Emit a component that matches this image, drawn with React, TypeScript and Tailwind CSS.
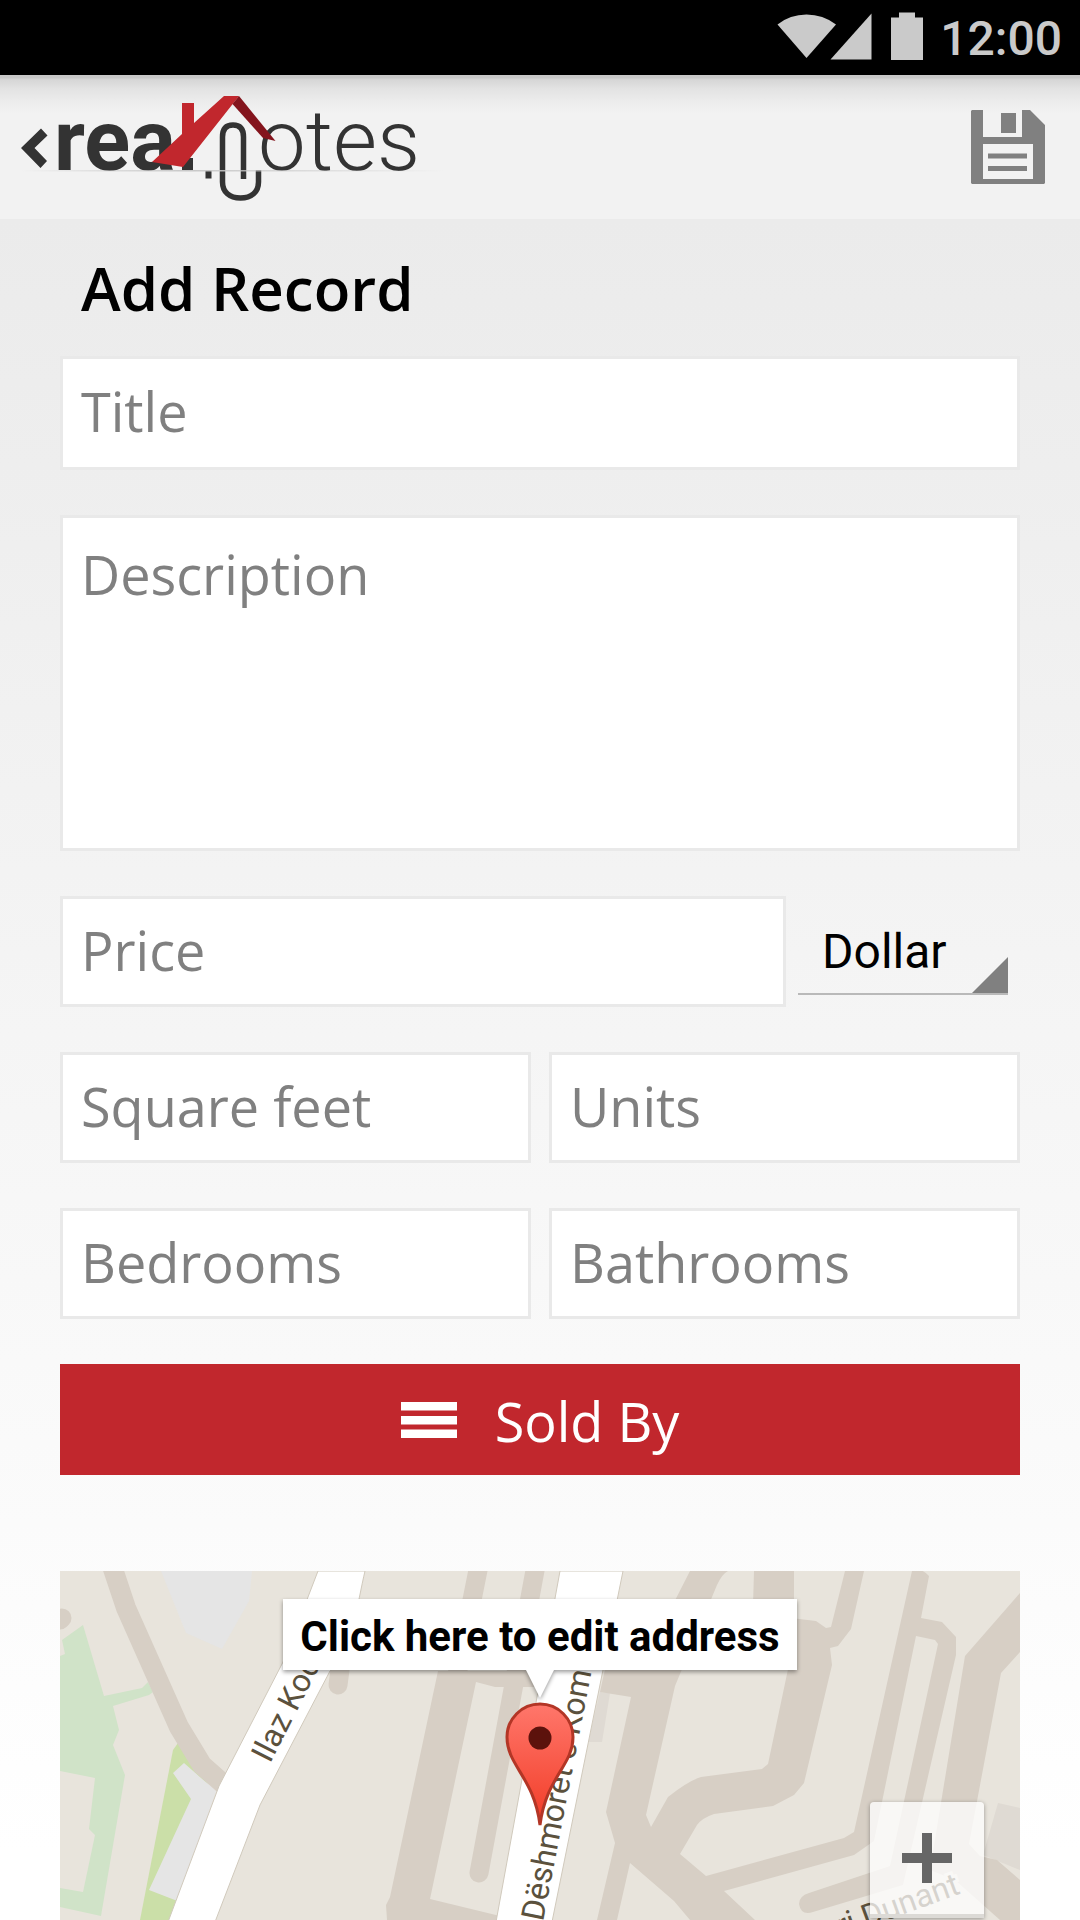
import React from "react";

const fieldClass =
  "block w-full min-w-0 rounded-none border-3 border-[#e9e9e9] bg-white px-[18px] text-[54px] text-black placeholder:text-[#808080] placeholder:opacity-100 outline-none";

function Field({ label, tall = false }: { label: string; tall?: boolean }) {
  return (
    <input
      type="text"
      aria-label={label}
      placeholder={label}
      className={`${fieldClass} pb-[4px] ${tall ? "h-[114px]" : "h-[111px]"}`}
    />
  );
}

function StatusBar() {
  return (
    <div className="flex h-[75px] items-center justify-end bg-black pr-[18px] text-[#cacaca]">
      <svg className="h-[75px] w-[160px]" viewBox="770 0 160 75" fill="currentColor" aria-hidden="true">
        <path d="M806.500 58 777.500 24.500Q790 14.500 806.500 14.500T836 24.500Z" />
        <path d="M871.500 13.500V59.500H830.500Z" />
        <path d="M891 17.500h8v-5h16v5h8v42.500h-32z" />
      </svg>
      <span className="ml-[10px] pt-[3px] font-['Roboto',sans-serif] text-[48px] font-medium leading-[72px]">12:00</span>
    </div>
  );
}

function Logo() {
  return (
    <svg className="h-[144px] w-[450px]" viewBox="0 75 450 144" role="img" aria-label="real notes">
      <defs>
        <linearGradient id="rule" x1="0" x2="1" y1="0" y2="0">
          <stop offset="0" stopColor="#c8c8c8" stopOpacity="0" />
          <stop offset="0.400" stopColor="#c8c8c8" />
          <stop offset="1" stopColor="#c8c8c8" stopOpacity="0" />
        </linearGradient>
      </defs>
      <path d="M41 128.500 47.500 135.500 34.500 148 47 161 40.500 168 21 148Z" fill="#333" />
      <g fill="#333" fontFamily="Roboto, sans-serif" fontSize="85">
        <text x="54" y="170" fontWeight="700">rea</text>
        <text x="258" y="170" fontWeight="300">otes</text>
      </g>
      <path d="M182 158h11v12h-11zM205.500 170.500h6v8h-6z" fill="#333" />
      <path
        d="M243.500 179V137q0-12-10.500-12t-10.500 12v45c0 10 7 16 18 16s18-6 18-16v-12"
        fill="none"
        stroke="#333"
        strokeWidth="5.500"
      />
      <path d="M182 103h12v20L224 96h15L183 167 152 162 182 134Z" fill="#c1272d" />
      <path d="M239 96 275.500 141 263 138 232.500 104Z" fill="#84141d" />
      <rect x="20" y="170" width="425" height="1.500" fill="url(#rule)" />
    </svg>
  );
}

function Header() {
  return (
    <header className="flex h-[144px] items-center justify-between bg-[#f2f2f2] bg-[linear-gradient(to_bottom,#c8c8c8_0px,#c8c8c8_3px,#d5d5d5_4px,#e3e3e3_14px,#ebebeb_25px,#f2f2f2_38px)] pr-[35px]">
      <button type="button" aria-label="Back">
        <Logo />
      </button>
      <button type="button" aria-label="Save">
        <svg className="size-[74px]" viewBox="0 0 74 74" fill="#808080" aria-hidden="true">
          <path
            fillRule="evenodd"
            d="M1 0H12V27H51V0H59L74 15V73L73 74H1L0 73V1ZM12 34V69H62V34Z"
          />
          <path d="M30 3h15v20H30zM17 43.500h39v5H17zM17 56h39v5H17z" />
        </svg>
      </button>
    </header>
  );
}

function StreetMap() {
  return (
    <svg
      className="absolute inset-0 h-full w-full"
      viewBox="60 1571 960 349"
      preserveAspectRatio="xMidYMin slice"
      aria-label="Map"
    >
      <defs>
        <linearGradient id="pin" x1="0" x2="0" y1="0" y2="1">
          <stop offset="0" stopColor="#ff776b" />
          <stop offset="1" stopColor="#f23b26" />
        </linearGradient>
      </defs>
      <path fill="#e8e4dc" d="M60 1571h960v349H60z" />
      {/* parks */}
      <g fill="#d0e3c8">
        <path d="M83 1625 104 1696 142 1688 148 1682 153 1692 149 1695 113 1706 119 1730 113 1745 125 1775 101 1916 60 1907V1888L83 1892 95 1835 89 1829 95 1778 60 1771V1656L65 1654 62 1640Z" />
        <path fill="#cbdfa8" d="M173 1750 178 1743 212 1790 175 1920H140Z" />
      </g>
      {/* buildings */}
      <g fill="#e5e5e5">
        <path d="M161 1571H252L249 1601 222 1649 186 1633Z" />
        <path d="M173 1773 184 1763 216 1791 180 1902 149 1890 191 1799Z" />
        <path fill="#dfdad3" d="M610 1693 602 1742H588L600 1692ZM998 1803 1020 1808V1870L983 1855Z" />
      </g>
      {/* minor streets */}
      <g fill="none" stroke="#d7cfc5" strokeWidth="19">
        <path d="M112 1566 126 1608 179 1727 202 1765 228 1788" strokeWidth="20" />
        <path d="M60 1620 62 1618" strokeLinecap="round" />
        <path d="M340 1670 338 1685" strokeLinecap="round" />
        <path d="M479 1565 440 1760" />
        <path d="M536 1565 479 1873" strokeLinecap="round" />
      </g>
      <g fill="#d7cfc5">
        <path d="M438 1671H538V1687H495L476 1682 430 1899 500 1916V1920H387L386 1905 390 1897Z" />
        <path d="M684 1571H728Q722 1574 717 1585L675 1686 646 1815 651 1827 668 1797Q688 1781 701 1777L762 1769 768 1764 791 1655V1618L816 1621 826 1628 831 1627 845 1571H864L851 1629 838 1646 830 1648 832 1665 804 1783 794 1795 773 1806 714 1814Q702 1818 697 1825L680 1854 706 1876 844 1838 854 1832 912 1571Q921 1567 929 1576L921 1618 942 1622 956 1637V1655L903 1885 813 1912Q801 1916 799 1904 799 1896 809 1893L890 1866 938 1644 935 1640 916 1636 874 1841 854 1855 724 1891 755 1920H690L674 1901 630 1863 617 1920H597L615 1843 606 1812 631 1697 600 1692 605 1669H640L690 1571Z" />
        <path d="M754 1571H794V1640H752Z" />
        <path d="M1020 1593V1652L1001 1673 969 1844 980 1856 997 1860 1020 1880V1920H1000L955 1880 930 1870 965 1656Z" />
      </g>
      {/* main streets */}
      <g fill="#fff" stroke="#d0c9bc" strokeWidth="1">
        <path d="M318 1571H365C358 1600 350 1660 330 1671L260 1805 215 1922H168L219 1786 283 1662Z" />
        <path d="M560 1571H623L552 1922H496L537 1697Z" />
      </g>
      <g fill="#5b513d" fontFamily="Roboto, sans-serif" fontSize="32">
        <text transform="translate(270 1764) rotate(-63)">Ilaz Kodra</text>
        <text transform="translate(543 1922) rotate(-79)">Dëshmorët e Kombit</text>
        <text transform="translate(841 1937) rotate(-20)" stroke="#e8e4dc" strokeWidth="6" paintOrder="stroke">
          ri Dunant
        </text>
      </g>
      <path
        d="M540 1825C534 1777 507 1766 507 1737A33 33 0 0 1 573 1737C573 1766 546 1777 540 1825Z"
        fill="url(#pin)"
        stroke="#b33626"
        strokeWidth="3"
      />
      <circle cx="540" cy="1738" r="11.500" fill="#5c120c" />
    </svg>
  );
}

function MapPanel() {
  return (
    <section className="relative mt-[96px] h-[349px] overflow-hidden" aria-label="Address map">
      <StreetMap />
      <button
        type="button"
        className="absolute left-1/2 top-[28px] h-[71px] w-[514px] -translate-x-1/2 whitespace-nowrap bg-white pt-[4px] font-['Roboto',sans-serif] text-[42px] font-bold leading-[67px] text-black drop-shadow-[0_2px_2px_rgba(0,0,0,0.4)]"
      >
        Click here to edit address
        <svg className="absolute left-1/2 top-full h-[28px] w-[28px] -translate-x-1/2" viewBox="0 0 28 28" fill="#fff" aria-hidden="true">
          <path d="M0 0H28L14 28Z" />
        </svg>
      </button>
      <button
        type="button"
        aria-label="Zoom in"
        className="absolute right-[36px] top-[231px] flex h-[116px] w-[114px] items-center justify-center rounded-t-sm border-b-4 border-[#dcdad6] bg-white/75 shadow-[0_1px_4px_rgba(0,0,0,0.35)]"
      >
        <svg className="size-[50px]" viewBox="0 0 50 50" fill="#666" aria-hidden="true">
          <path d="M20 0h10v20h20v10H30v20H20V30H0V20h20z" />
        </svg>
      </button>
    </section>
  );
}

export default function App() {
  return (
    <div className="min-h-screen bg-[linear-gradient(to_bottom,#ebebeb_219px,#ffffff_1850px)] font-['Open_Sans','Noto_Sans',sans-serif]">
      <StatusBar />
      <Header />
      <main className="px-[60px]">
        <h1 className="px-[21px] pt-[28px] text-[60px] font-semibold leading-[82px] text-black">Add Record</h1>
        <form className="mt-[27px] flex flex-col gap-[45px]">
          <Field label="Title" tall />
          <textarea
            aria-label="Description"
            placeholder="Description"
            className={`${fieldClass} h-[336px] resize-none py-[18px] leading-[76px]`}
          />
          <div className="flex gap-[12px]">
            <div className="min-w-0 flex-1">
              <Field label="Price" />
            </div>
            <div className="relative mr-[12px] mb-[12px] w-[210px] border-b-2 border-[#b9b9b9]">
              <select
                aria-label="Currency"
                defaultValue="Dollar"
                className="h-full w-full appearance-none bg-transparent pl-[24px] pt-[14px] font-['Roboto',sans-serif] text-[48px] text-black outline-none"
              >
                <option>Dollar</option>
              </select>
              <svg className="pointer-events-none absolute bottom-0 right-0 size-[36px]" viewBox="0 0 36 36" fill="#808080" aria-hidden="true">
                <path d="M36 0V36H0Z" />
              </svg>
            </div>
          </div>
          <div className="grid grid-cols-2 gap-x-[18px] gap-y-[45px]">
            <Field label="Square feet" />
            <Field label="Units" />
            <Field label="Bedrooms" />
            <Field label="Bathrooms" />
          </div>
          <button
            type="button"
            className="flex h-[111px] w-full items-center justify-center gap-[38px] bg-[#c1272d] text-[54px] text-white"
          >
            <svg className="h-[36px] w-[56px]" viewBox="0 0 56 36" fill="currentColor" aria-hidden="true">
              <path d="M0 0h56v8.500H0zM0 14h56v8.500H0zM0 27.500h56V36H0z" />
            </svg>
            <span className="pt-[4px]">Sold By</span>
          </button>
        </form>
        <MapPanel />
      </main>
    </div>
  );
}
